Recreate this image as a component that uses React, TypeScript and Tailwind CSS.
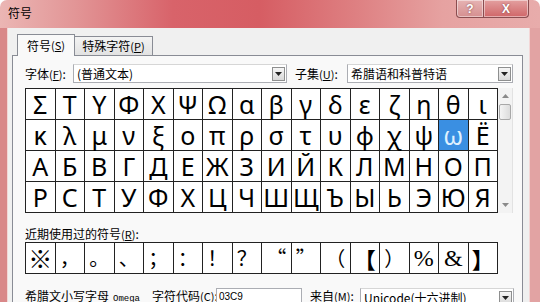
import React from "react";

const rows: string[][] = [
  ["Σ", "Τ", "Υ", "Φ", "Χ", "Ψ", "Ω", "α", "β", "γ", "δ", "ε", "ζ", "η", "θ", "ι"],
  ["κ", "λ", "μ", "ν", "ξ", "ο", "π", "ρ", "σ", "τ", "υ", "φ", "χ", "ψ", "ω", "Ё"],
  "АБВГДЕЖЗИЙКЛМНОП".split(""),
  "РСТУФХЦЧШЩЪЫЬЭЮЯ".split(""),
];

const recent = ["※", "，", "。", "、", "；", "：", "！", "？", "“", "”", "（", "【", "）", "％", "＆", "】"];

function Mn({ k }: { k: string }) {
  return (
    <span className="text-[11px]">
      (<span className="underline">{k}</span>)
    </span>
  );
}

function Combo({ text, className }: { text: string; className: string }) {
  return (
    <div
      className={`h-[19px] bg-white border border-[#abadb3] border-t-[#d6d6d6] flex items-center pl-[3px] pr-[1px] ${className}`}
    >
      <span className="flex-1 text-[12px] leading-[16px] text-black whitespace-nowrap">{text}</span>
      <div className="w-[13px] h-[14px] border border-[#8e8f8f] bg-gradient-to-b from-[#f6f6f6] to-[#d9d9d9] flex items-center justify-center">
        <svg width="7" height="4" viewBox="0 0 7 4">
          <path d="M0 0h7L3.5 4z" fill="#222" />
        </svg>
      </div>
    </div>
  );
}

export default function App() {
  return (
    <div className="w-[540px] h-[302px] overflow-hidden bg-white font-['Noto_Sans_CJK_SC',sans-serif]">
      <div className="h-full flex flex-col rounded-t-[7px] bg-[linear-gradient(90deg,#ebb6b4_0%,#e29596_14%,#d8636a_32%,#d65d63_48%,#de8082_66%,#e6a2a1_82%,#e8acab_100%)]">
        {/* title bar */}
        <div className="h-[28px] flex items-start shrink-0">
          <span className="pl-[8px] pt-[5px] text-[12px] leading-[16px] text-black">符号</span>
          <div className="ml-auto mr-[11px] flex h-[18px]">
            <div className="w-[28px] h-full rounded-bl-[4px] border border-t-0 border-[#8a4d50] bg-[linear-gradient(180deg,#e6b3b3,#d58f90)] shadow-[inset_0_0_0_1px_rgba(255,255,255,0.45)] flex items-center justify-center">
              <span className="text-white text-[12px] font-bold leading-none font-['Liberation_Sans',sans-serif] [text-shadow:0_0_2px_#7a3b3b]">?</span>
            </div>
            <div className="w-[45px] h-full rounded-br-[4px] border border-t-0 border-l-0 border-[#8a4d50] bg-[linear-gradient(180deg,#e3a0a0,#d06668)] shadow-[inset_0_0_0_1px_rgba(255,255,255,0.45)] flex items-center justify-center">
              <span className="text-white text-[12px] font-bold leading-none font-['Liberation_Sans',sans-serif] [text-shadow:0_0_2px_#7a3b3b]">X</span>
            </div>
          </div>
        </div>
        {/* body */}
        <div className="flex flex-1 min-h-0">
          <div className="w-[8px] bg-[#d98889] border-r border-[#f3d6d6]" />
          <div className="flex-1 bg-[#f0f0f0] pl-[4px] pr-[6px] pt-[6px] flex flex-col min-w-0">
            {/* tabs */}
            <div className="flex items-end h-[21px] pl-[5px] relative z-10 shrink-0">
              <div className="w-[58px] h-[22px] -mb-px border border-b-0 border-[#898c95] bg-[#f9f9f9] flex items-center justify-center text-[12px] text-black">
                符号<Mn k="S" />
              </div>
              <div className="w-[78px] h-[19px] border border-l-0 border-b-0 border-[#898c95] bg-gradient-to-b from-[#f3f3f3] to-[#e2e2e2] flex items-center justify-center text-[12px] text-black">
                特殊字符<Mn k="P" />
              </div>
            </div>
            {/* panel */}
            <div className="flex-1 border border-[#898c95] bg-[#f9f9f9] pt-[8px] pl-[12px] pr-[8px]">
              <div className="flex items-center h-[19px] text-[12px] text-black">
                <span className="w-[48px] whitespace-nowrap">
                  字体<Mn k="F" />:
                </span>
                <Combo text="(普通文本)" className="w-[214px]" />
                <span className="w-[52px] ml-[8px] whitespace-nowrap">
                  子集<Mn k="U" />:
                </span>
                <Combo text="希腊语和科普特语" className="w-[166px]" />
              </div>
              {/* symbol grid */}
              <div className="flex mt-[5px]">
                <div className="grid grid-cols-16 w-[473px] border-l border-t border-[#222] bg-white font-['Noto_Sans',sans-serif]">
                  {rows.flatMap((r, ri) =>
                    r.map((c, ci) => {
                      const sel = ri === 1 && ci === 14;
                      return (
                        <div
                          key={`${ri}-${ci}`}
                          className={`h-[31px] border-r border-b border-[#222] flex items-center justify-center text-[25px] leading-none ${
                            sel ? "bg-[#3a8fe2] text-[#dff1ff]" : "text-black"
                          }`}
                        >
                          {c}
                        </div>
                      );
                    })
                  )}
                </div>
                <div className="w-[15px] h-[125px] bg-[#f3f3f3] border-r border-[#e2e2e2] flex flex-col">
                  <div className="h-[16px] flex items-center justify-center">
                    <svg width="7" height="4" viewBox="0 0 7 4">
                      <path d="M0 4h7L3.5 0z" fill="#8a8a8a" />
                    </svg>
                  </div>
                  <div className="h-[16px] mx-[1px] rounded-[2px] border border-[#a8a8a8] bg-gradient-to-r from-[#f4f4f4] to-[#dcdcdc]" />
                  <div className="flex-1" />
                  <div className="h-[16px] flex items-center justify-center">
                    <svg width="7" height="4" viewBox="0 0 7 4">
                      <path d="M0 0h7L3.5 4z" fill="#8a8a8a" />
                    </svg>
                  </div>
                </div>
              </div>
              {/* recent */}
              <div className="mt-[12px] h-[17px] leading-[17px] text-[12px] text-black whitespace-nowrap">
                近期使用过的符号<Mn k="R" />:
              </div>
              <div className="grid grid-cols-16 w-[473px] border-l border-t border-[#222] bg-white">
                {recent.map((c, i) => (
                  <div
                    key={i}
                    className={`h-[31px] border-r border-b border-[#222] flex items-center justify-center leading-none text-black ${
                      c === "※"
                        ? "text-[24px] font-bold"
                        : c === "＆" || c === "％"
                        ? "text-[24px] font-['Liberation_Serif',serif]"
                        : c === "【" || c === "】"
                        ? "text-[22px] font-bold"
                        : "text-[20px]"
                    }`}
                  >
                    {c === "＆" ? "&" : c === "％" ? "%" : c}
                  </div>
                ))}
              </div>
              {/* bottom row */}
              <div className="flex items-start mt-[14px] text-[12px] text-black">
                <div className="w-[127px] mt-[1px] leading-[14px] whitespace-nowrap">
                  希腊文小写字母
                  <span className="ml-[4px] text-[9px] font-['Liberation_Mono',monospace]">Omega</span>
                </div>
                <div className="w-[64px] mt-[1px] leading-[14px] whitespace-nowrap">
                  字符代码<Mn k="C" />:
                </div>
                <div className="w-[86px] h-[20px] border border-[#abadb3] bg-white pl-[2px] pt-[2px] text-[10px] leading-[12px] font-['Liberation_Sans',sans-serif]">
                  03C9
                </div>
                <div className="w-[50px] ml-[8px] mt-[1px] leading-[14px] whitespace-nowrap">
                  来自<Mn k="M" />:
                </div>
                <Combo text="Unicode(十六进制)" className="flex-1" />
              </div>
            </div>
          </div>
          <div className="w-[11px] bg-[#e2a3a3] border-l border-[#f3d6d6]" />
        </div>
      </div>
    </div>
  );
}
